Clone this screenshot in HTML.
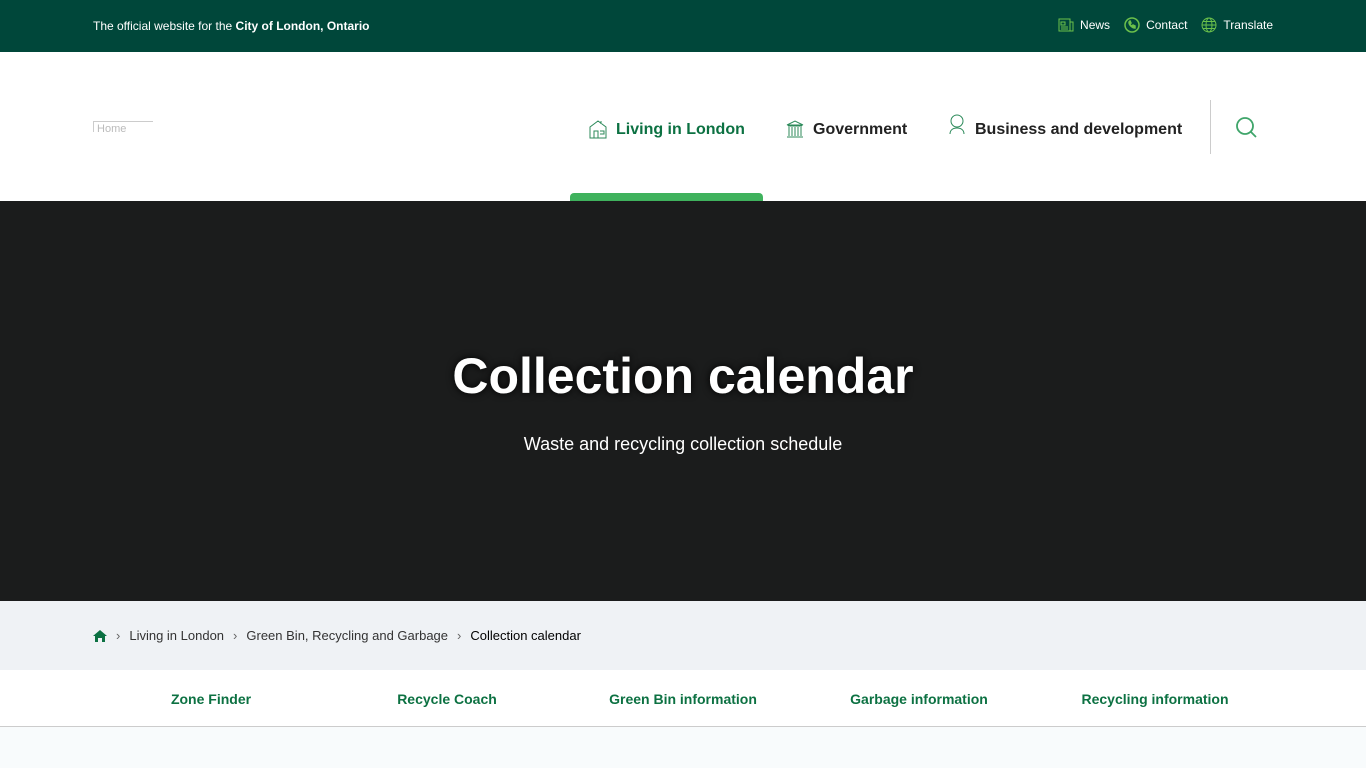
<!DOCTYPE html>
<html><head><meta charset="utf-8"><style>
*{margin:0;padding:0;box-sizing:border-box}
body{width:1366px;height:768px;overflow:hidden;font-family:"Liberation Sans",Arial,sans-serif;background:#f8fbfc}
.top{height:52px;background:#00473a;color:#fff;font-size:12px;position:relative}
.top .l{position:absolute;left:93px;top:19px}
.top .r{position:absolute;right:93px;top:17px;display:flex;gap:14px;align-items:center}
.top .r span{display:flex;align-items:center;gap:6px}
.hdr{height:149px;background:#fff;position:relative}
.nav div{position:absolute;top:63px;height:24px;display:flex;align-items:flex-end;gap:8px;white-space:nowrap;font-size:16px;font-weight:bold}
.sep{position:absolute;left:1210px;top:48px;width:1px;height:54px;background:#ccc}
.tab{position:absolute;left:570px;top:193px;width:193px;height:10px;background:#3fb25d;border-radius:4px 4px 0 0}
.hero{position:absolute;top:201px;left:0;width:1366px;height:400px;background:#1b1c1c;color:#fff;text-align:center}
.hero h1{font-size:50px;font-weight:bold;margin-top:146px;text-shadow:0 0 8px #000}
.hero p{font-size:18px;margin-top:29px}
.bc{position:absolute;top:601px;width:1366px;height:69px;background:#eff2f5;font-size:13px;color:#333}
.bc .in{position:absolute;left:93px;top:27px;display:flex;align-items:center;gap:9px}
.ql{position:absolute;top:670px;width:1366px;height:57px;background:#fff;border-bottom:1px solid #ccc;font-size:14px;font-weight:bold;color:#0c7142}
.ql span{position:absolute;top:21px;transform:translateX(-50%);white-space:nowrap}
</style></head><body>
<div class="top"><div class="l">The official website for the <b>City of London, Ontario</b></div>
<div class="r">
<span><svg width="16" height="14" viewBox="0 0 16 14" fill="none" stroke="#6bc04b"><rect x="1" y="1" width="11" height="12"/><path d="M12 4h3v9h-3M3 4h4v3H3zM3 9h7M3 11h7"/></svg>News</span>
<span><svg width="16" height="16" viewBox="0 0 16 16" fill="none" stroke="#6bc04b" stroke-width="1.5"><circle cx="8" cy="8" r="7"/><path d="M5 5c0 3 3 6 6 6l0-2-2-1-1 1c-1-.5-2-1.5-2-2l1-1-1-2z" fill="#6bc04b"/></svg>Contact</span>
<span><svg width="16" height="16" viewBox="0 0 16 16" fill="none" stroke="#6bc04b"><circle cx="8" cy="8" r="7"/><ellipse cx="8" cy="8" rx="3" ry="7"/><path d="M1 8h14M2 4.5h12M2 11.5h12"/></svg>Translate</span>
</div></div>
<div class="hdr">
<div style="position:absolute;left:93px;top:69px;width:60px;height:11px;border-left:1px solid #ccc;border-top:1px solid #ccc;font-size:11px;color:#bbb;overflow:hidden;line-height:14px">&nbsp;Home</div>
<div class="nav">
<div style="left:588px;color:#0c7142"><svg width="20" height="20" viewBox="0 0 20 20" fill="none" stroke="#2c8a5a"><path d="M2 19V8l8-6 8 6v11zM6 19v-7h4v7M12 12h4v3h-4M13 2v3"/></svg>Living in London</div>
<div style="left:785px;color:#222"><svg width="20" height="20" viewBox="0 0 20 20" fill="none" stroke="#2c8a5a"><path d="M2 6l8-4 8 4zM3 7h14M4 8v9M7 8v9M10 8v9M13 8v9M16 8v9M2 18h16"/></svg>Government</div>
<div style="left:947px;color:#222"><svg width="20" height="22" viewBox="0 0 20 22" fill="none" stroke="#2c8a5a" style="margin-bottom:4px"><circle cx="10" cy="8" r="6"/><path d="M3 21c0-4 3-6 7-6s7 2 7 6"/></svg>Business and development</div>
</div>
<div class="sep"></div>
<svg style="position:absolute;left:1235px;top:64px" width="22" height="22" viewBox="0 0 22 22" fill="none" stroke="#3fa56a" stroke-width="1.8"><circle cx="10" cy="10" r="8"/><path d="M16 16l5 5"/></svg>
</div>
<div class="tab"></div>
<div class="hero"><h1>Collection calendar</h1><p>Waste and recycling collection schedule</p></div>
<div class="bc"><div class="in">
<svg width="14" height="12" viewBox="0 0 14 12" fill="#0c7142"><path d="M7 0l7 6h-2v6H9V8H5v4H2V6H0z"/></svg>
<span style="color:#666">›</span><span>Living in London</span><span style="color:#666">›</span><span>Green Bin, Recycling and Garbage</span><span style="color:#666">›</span><span style="color:#000">Collection calendar</span>
</div></div>
<div class="ql"><span style="left:211px">Zone Finder</span><span style="left:447px">Recycle Coach</span><span style="left:683px">Green Bin information</span><span style="left:919px">Garbage information</span><span style="left:1155px">Recycling information</span></div>
</body></html>
